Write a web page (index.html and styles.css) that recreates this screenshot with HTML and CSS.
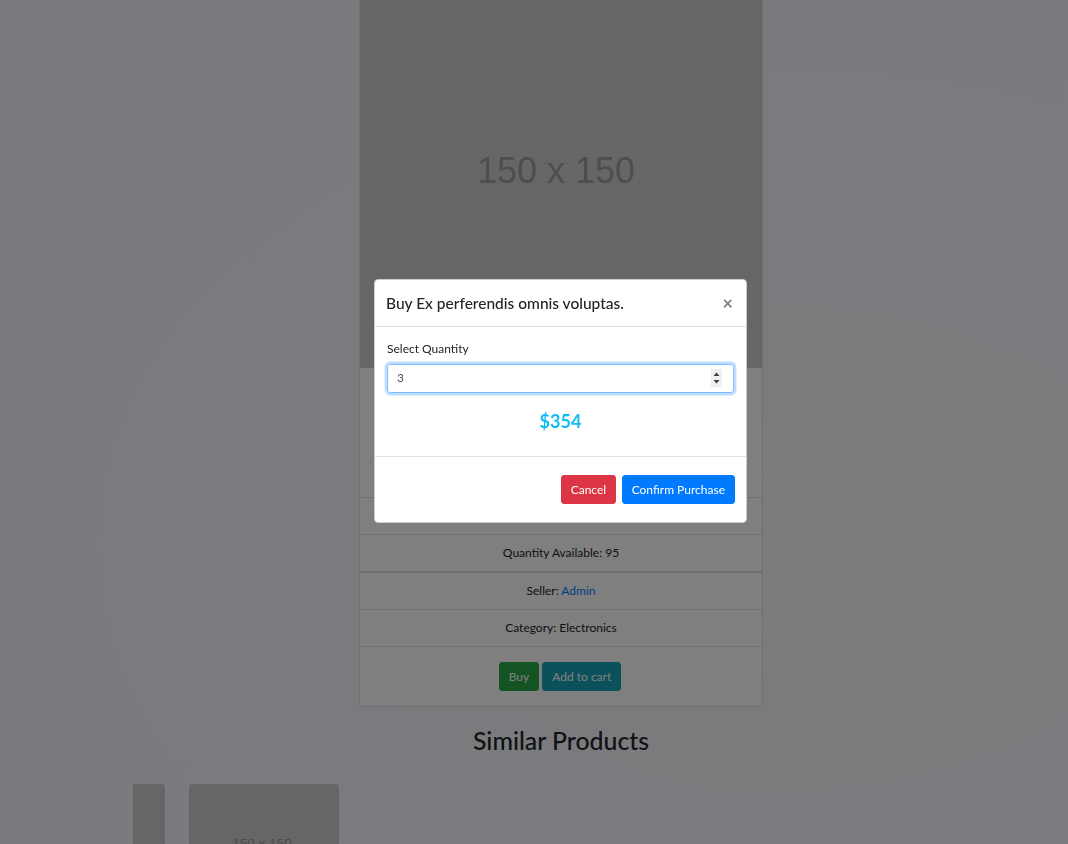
FILE: index.html
```html
<!DOCTYPE html>
<html lang="en">
<head>
<meta charset="utf-8">
<title>Product</title>
<link rel="stylesheet" href="styles.css">
</head>
<body>
<main class="page">
  <section class="product">
    <div class="card">
      <div class="card-img"><span class="ph-text">150 x 150</span></div>
      <div class="card-body-top"></div>
      <ul class="list">
        <li class="list-item"></li>
        <li class="list-item">Quantity Available: 95</li>
        <li class="list-item list-item-sep">Seller: <a class="link" href="#">Admin</a></li>
        <li class="list-item">Category: Electronics</li>
      </ul>
      <div class="card-actions">
        <button class="btn btn-success">Buy</button>
        <button class="btn btn-info">Add to cart</button>
      </div>
    </div>
    <h2 class="similar-title">Similar Products</h2>
  </section>
  <div class="similar-row">
    <div class="sim-card sim-card-clipped"></div>
    <div class="sim-card"><span class="sim-text">150 x 150</span></div>
  </div>
</main>

<div class="backdrop"></div>

<div class="modal">
  <div class="modal-header">
    <h5 class="modal-title">Buy Ex perferendis omnis voluptas.</h5>
    <span class="close">&times;</span>
  </div>
  <div class="modal-body">
    <label class="label">Select Quantity</label>
    <div class="input">
      <span class="input-value">3</span>
      <span class="spinner">
        <svg width="11" height="18" viewBox="0 0 11 18">
          <path d="M5.5 3.5 L8.5 7 L2.5 7 Z" fill="#404040"/>
          <path d="M2.5 11 L8.5 11 L5.5 14.5 Z" fill="#404040"/>
        </svg>
      </span>
    </div>
    <div class="price">$354</div>
  </div>
  <div class="modal-footer">
    <button class="btn btn-danger">Cancel</button>
    <button class="btn btn-primary">Confirm Purchase</button>
  </div>
</div>
</body>
</html>
```
FILE: styles.css
```css
html, body {
  margin: 0;
  height: 100%;
  overflow: hidden;
}
body {
  font-family: Lato, "Open Sans", sans-serif;
  font-size: 12px;
  line-height: 1.5;
  color: #212529;
  background: radial-gradient(ellipse at 75% 65%, #f8f8fc 0%, #f6f5fd 45%, #f5f3fe 100%);
}
* { box-sizing: border-box; }

.page {
  margin-top: -33px;
}
.product {
  width: 404px;
  margin-left: 359px;
}
.card {
  background: #fff;
  border: 1px solid rgba(0,0,0,.125);
  border-radius: 3px;
  overflow: hidden;
}
.card-img {
  height: 400px;
  background: #cccccc;
  display: flex;
  align-items: center;
  justify-content: center;
  padding: 6px 10px 0 0;
}
.ph-text {
  font-family: "Liberation Sans", Arial, sans-serif;
  font-size: 36px;
  color: #9c9c9c;
  filter: blur(0.4px);
}
.card-body-top {
  height: 129px;
}

.list {
  list-style: none;
  margin: 0;
  padding: 0;
}
.list-item {
  border-top: 1px solid rgba(0,0,0,.125);
  padding: 9px 15px;
  min-height: 37px;
  line-height: 18px;
  text-align: center;
}
.list-item-sep {
  border-top-width: 2px;
  min-height: 38px;
}
.link {
  color: #007bff;
  text-decoration: none;
}
.card-actions {
  border-top: 1px solid rgba(0,0,0,.125);
  padding: 15px 16px 15px 14px;
  display: flex;
  justify-content: center;
  gap: 3px;
}

.btn {
  font-family: inherit;
  font-size: 12px;
  line-height: 18px;
  padding: 4.5px 9px;
  border: 1px solid transparent;
  border-radius: 3px;
  color: #fff;
  cursor: pointer;
}
.btn-success { background: #28a745; border-color: #28a745; }
.btn-info { background: #17a2b8; border-color: #17a2b8; }
.btn-danger { background: #dc3545; border-color: #dc3545; padding: 4.5px 8.5px; }
.btn-primary { background: #007bff; border-color: #007bff; }

.similar-title {
  margin: 19px 0 28px;
  font-size: 24.8px;
  font-weight: 500;
  line-height: 1.2;
  text-align: center;
}
.similar-row {
  margin-left: 133px;
  display: flex;
  gap: 24px;
}
.sim-card {
  width: 150px;
  height: 150px;
  background: #cccccc;
  border-radius: 4px;
  text-align: center;
  padding: 50px 4px 0 0;
}
.sim-card-clipped {
  width: 32px;
  border-radius: 0 4px 4px 0;
}
.sim-text {
  font-family: "Liberation Sans", Arial, sans-serif;
  font-size: 13.5px;
  color: #969696;
}

.backdrop {
  position: fixed;
  inset: 0;
  background: rgba(0,0,0,.5);
}
.modal {
  position: fixed;
  top: 279px;
  left: 374px;
  width: 373px;
  background: #fff;
  border: 1px solid rgba(0,0,0,.2);
  border-radius: 4.5px;
}
.modal-header {
  display: flex;
  align-items: center;
  justify-content: space-between;
  padding: 12px 12px 11px 11px;
  border-bottom: 1px solid #dee2e6;
}
.modal-title {
  margin: 0;
  font-size: 15.5px;
  font-weight: 500;
  line-height: 22.5px;
}
.close {
  font-size: 18px;
  font-weight: 700;
  line-height: 1;
  color: #000;
  opacity: .5;
  margin-right: 1px;
}
.modal-body {
  padding: 13px 12px 12px;
}
.label {
  display: block;
  margin-bottom: 6px;
  line-height: 18px;
}
.input {
  display: flex;
  align-items: center;
  justify-content: space-between;
  height: 29px;
  padding: 0 11px 0 9px;
  border: 1px solid #80bdff;
  border-radius: 3px;
  box-shadow: 0 0 0 2.4px rgba(0,123,255,.25);
  color: #495057;
}
.spinner {
  display: flex;
  width: 11px;
  height: 18px;
  background: #efefef;
}
.price {
  margin: 18px 0 12px;
  font-size: 18px;
  font-weight: 700;
  line-height: 21.6px;
  text-align: center;
  color: #12bdf3;
}
.modal-footer {
  display: flex;
  justify-content: flex-end;
  gap: 6px;
  padding: 18px 11px 18px 12px;
  border-top: 1px solid #dee2e6;
}
```
